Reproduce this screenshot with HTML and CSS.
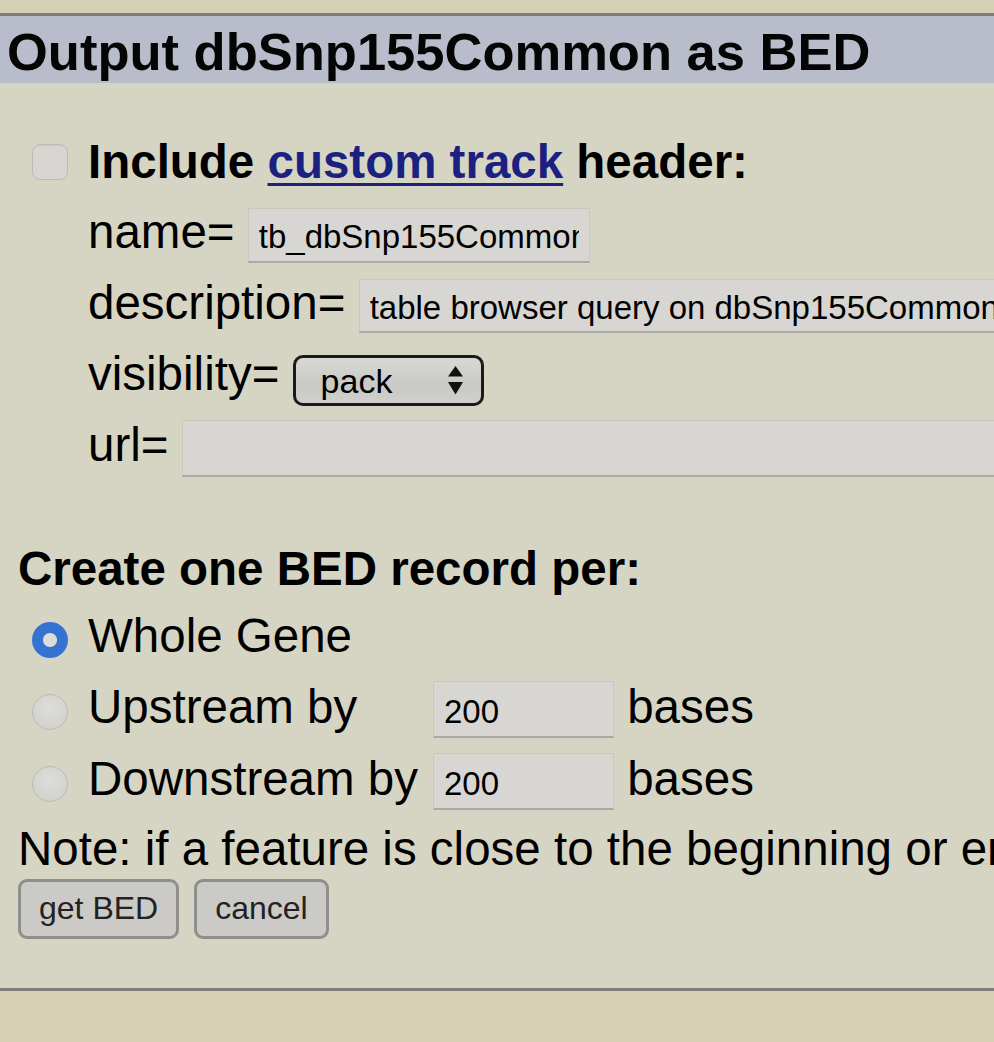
FILE: index.html
```html
<!DOCTYPE html>
<html>
<head>
<meta charset="utf-8">
<title>Output dbSnp155Common as BED</title>
<link rel="stylesheet" href="styles.css">
</head>
<body>
<div class="top-space"></div>
<section class="panel">
  <h2 class="title">Output dbSnp155Common as BED</h2>
  <div class="content">
    <div class="row r-include"><span class="cb"></span><b>Include <a href="#" class="link">custom track</a> header:</b></div>
    <div class="row r-field">name= <input class="txt w-name" type="text" value="tb_dbSnp155Common"></div>
    <div class="row r-field">description= <input class="txt w-desc" type="text" value="table browser query on dbSnp155Common"></div>
    <div class="row r-field">visibility= <span class="sel"><span class="sel-text">pack</span><svg class="sel-arrows" width="15" height="29" viewBox="0 0 15 29"><path d="M7.5 0 L15 10.5 L0 10.5 Z" fill="#111"/><path d="M0 16 L15 16 L7.5 28.5 Z" fill="#111"/></svg></span></div>
    <div class="row r-field">url= <input class="txt w-url" type="text" value=""></div>

    <div class="row r-create"><b>Create one BED record per:</b></div>
    <div class="row r-whole"><span class="radio on"></span>Whole Gene</div>
    <div class="row r-opt"><span class="radio"></span><span class="opt-label">Upstream by</span><input class="txt w-num" type="text" value="200"> bases</div>
    <div class="row r-opt"><span class="radio"></span><span class="opt-label">Downstream by</span><input class="txt w-num" type="text" value="200"> bases</div>
    <div class="row r-note">Note: if a feature is close to the beginning or end of a chromosome and upstream/downstream bases are added, they may be truncated in order to avoid extending past the edge of the chromosome.</div>
    <div class="buttons"><button class="btn">get BED</button><button class="btn">cancel</button></div>
  </div>
</section>
</body>
</html>
```

FILE: styles.css
```css
html, body {
  margin: 0;
  padding: 0;
  overflow: hidden;
}
body {
  background: #d5d0b3;
  font-family: "Liberation Sans", Arial, sans-serif;
  color: #000;
  width: 994px;
  height: 1042px;
}
.top-space {
  height: 13px;
}
.panel {
  background: #d6d5c4;
  border-top: 3px solid #7d7d7b;
  border-bottom: 3px solid #7d7d7b;
}
.title {
  margin: 0;
  background: #b9bdcb;
  font-size: 52.5px;
  font-weight: bold;
  height: 67px;
  box-sizing: border-box;
  padding: 4px 0 0 7px;
  line-height: 63px;
  white-space: nowrap;
  color: #050505;
}
.content {
  padding: 45px 0 49.5px 18px;
  font-size: 47.5px;
}
.row {
  white-space: nowrap;
}
.r-include {
  height: 68px;
  line-height: 68px;
}
.r-field {
  height: 71px;
  line-height: 71px;
  padding-left: 70px;
}
.r-create {
  margin-top: 56.5px;
  height: 64px;
  line-height: 64px;
}
.r-whole {
  height: 70px;
  line-height: 70px;
}
.r-opt {
  height: 72px;
  line-height: 72px;
}
.r-note {
  margin-top: 4px;
  height: 60px;
  line-height: 60px;
}
.cb {
  display: inline-block;
  width: 36px;
  height: 36px;
  box-sizing: border-box;
  margin: 0 20px 0 14px;
  border-radius: 8px;
  background: #d7d6d2;
  border: 1.5px solid #bdbcb6;
  box-shadow: inset 0 1px 1px rgba(0,0,0,0.06);
  vertical-align: -2px;
}
.link {
  color: #1b2180;
  text-decoration: underline;
  text-decoration-thickness: 3px;
  text-underline-offset: 5px;
}
.txt {
  font-family: "Liberation Sans", Arial, sans-serif;
  font-size: 33px;
  color: #000;
  background: #d7d6d2;
  border: 1px solid #c9c8b9;
  border-bottom: 2px solid #a9a9a5;
  border-radius: 0;
  box-sizing: border-box;
  padding: 5px 10px 0 10px;
  margin: 0;
  vertical-align: middle;
  outline: none;
}
.w-name {
  width: 342px;
  height: 55px;
}
.w-desc {
  width: 700px;
  height: 54px;
}
.w-url {
  width: 900px;
  height: 57px;
}
.w-num {
  width: 181px;
  height: 57px;
}
.sel {
  display: inline-flex;
  align-items: center;
  justify-content: space-between;
  box-sizing: border-box;
  width: 191px;
  height: 51px;
  padding: 0 18px 0 25px;
  border: 3px solid #1a1a1a;
  border-radius: 10px;
  background: linear-gradient(#d8d8d4, #c9c9c5 60%, #cfcfcb);
  vertical-align: middle;
  margin-bottom: -6px;
  line-height: 1;
}
.sel-text {
  font-size: 34px;
  padding-top: 2px;
}
.sel-arrows {
  display: block;
}
.radio {
  display: inline-block;
  width: 36px;
  height: 36px;
  box-sizing: border-box;
  border-radius: 50%;
  margin: 0 20px 0 14px;
  background: radial-gradient(circle at 50% 40%, #dddddA, #cdcdc9);
  border: 1.5px solid #bcbbb4;
  vertical-align: -7px;
}
.radio.on {
  border: none;
  background: radial-gradient(circle, #dcdcd8 0 6.5px, #3573d3 7.5px);
  vertical-align: -6px;
}
.opt-label {
  display: inline-block;
  width: 345px;
}
.buttons {
  display: flex;
  gap: 15px;
  height: 60px;
}
.btn {
  font-family: "Liberation Sans", Arial, sans-serif;
  font-size: 32px;
  color: #222;
  background: #cbcac6;
  border: 3px solid #8f8f8d;
  border-radius: 9px;
  height: 60px;
  padding: 0 18px;
  margin: 0;
}
```
